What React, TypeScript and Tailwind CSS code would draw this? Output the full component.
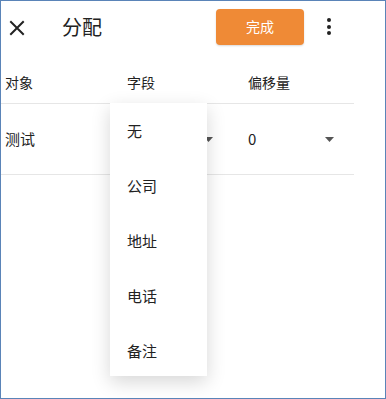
import React from "react";

const font = { fontFamily: '"Noto Sans CJK SC", "Noto Sans", sans-serif' };

function Caret() {
  return (
    <svg width="9" height="5" viewBox="0 0 9 5" className="shrink-0">
      <path d="M0 0 L9 0 L4.5 5 Z" fill="#555" />
    </svg>
  );
}

export default function App() {
  const items = ["无", "公司", "地址", "电话", "备注"];
  return (
    <div
      className="relative w-[386px] h-[399px] bg-white border border-[#5a84b8] overflow-hidden text-[#222]"
      style={font}
    >
      {/* header */}
      <div className="flex items-center h-[51px] pl-[8px]">
        <svg width="16" height="16" viewBox="0 0 16 16" className="mt-[2px]">
          <path d="M2 2 L14 14 M14 2 L2 14" stroke="#222" strokeWidth="2" strokeLinecap="square" />
        </svg>
        <div className="ml-[37px] text-[20px] leading-none">分配</div>
        <button className="ml-[114px] w-[88px] h-[36px] rounded-[4px] bg-[#ef8a36] text-white text-[14px] shadow-[0_1px_2px_rgba(0,0,0,0.15)]">
          完成
        </button>
        <div className="ml-[22px] flex flex-col items-center gap-[2.5px] w-[6px]">
          <span className="w-[4px] h-[4px] rounded-full bg-[#222]" />
          <span className="w-[4px] h-[4px] rounded-full bg-[#222]" />
          <span className="w-[4px] h-[4px] rounded-full bg-[#222]" />
        </div>
      </div>

      {/* column headers */}
      <div className="flex items-center h-[51px] pt-[9px] text-[14px] w-[353px]">
        <div className="w-[121px] pl-[4px]">对象</div>
        <div className="w-[121px] pl-[5px]">字段</div>
        <div className="pl-[5px]">偏移量</div>
      </div>

      {/* row */}
      <div className="flex items-center h-[72px] w-[353px] border-t border-b border-[#e6e6e6] text-[15px]">
        <div className="w-[121px] pl-[4px]">测试</div>
        <div className="w-[121px] pl-[5px]">
          <div className="w-[86px] flex justify-end items-center">
            <Caret />
          </div>
        </div>
        <div className="pl-[5px]">
          <div className="w-[86px] flex justify-between items-center">
            <span>0</span>
            <Caret />
          </div>
        </div>
      </div>

      {/* dropdown menu */}
      <div className="absolute left-[109px] top-[102px] w-[97px] h-[273px] bg-white shadow-[0_6px_18px_rgba(0,0,0,0.16)] overflow-hidden pt-[1px]">
        {items.map((t) => (
          <div key={t} className="h-[55px] flex items-center pl-[17px] text-[15px]">
            {t}
          </div>
        ))}
      </div>
    </div>
  );
}
